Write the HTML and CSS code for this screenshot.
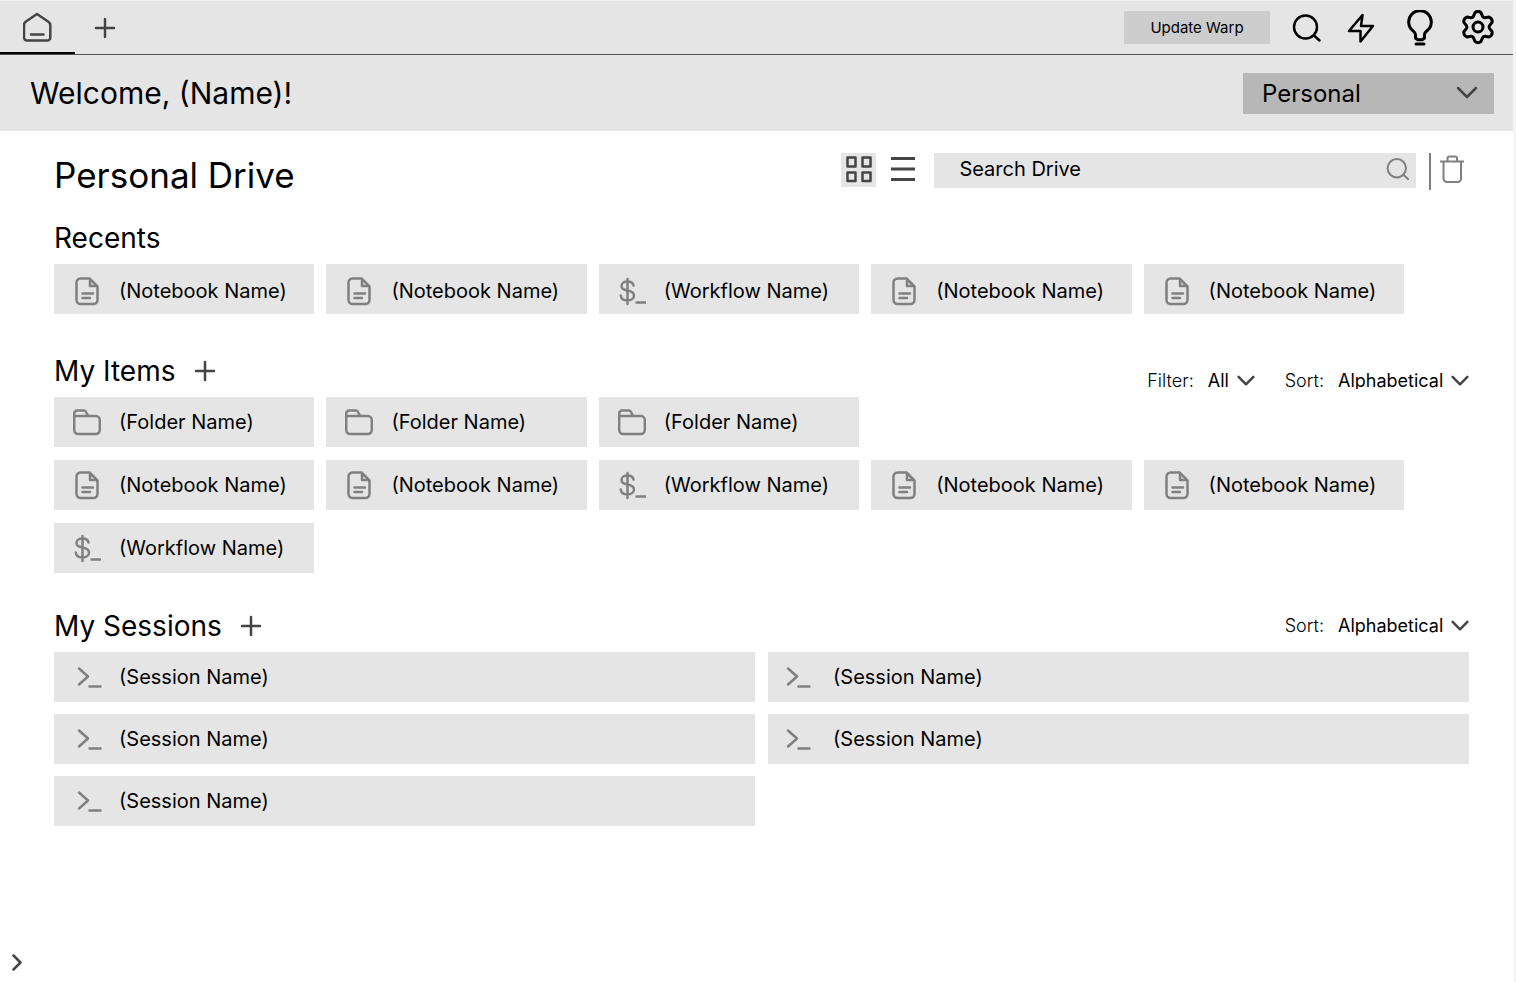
FILE: index.html
```html
<!DOCTYPE html>
<html lang="en">
<head>
<meta charset="utf-8">
<title>Personal Drive</title>
<link rel="stylesheet" href="styles.css">
</head>
<body>
<svg class="sprite" aria-hidden="true">
  <symbol id="file" viewBox="0 0 28 30">
    <path d="M8 2.500h8.500l8 8V24a4 4 0 0 1-4 4H7.500a4 4 0 0 1-4-4V6.500a4 4 0 0 1 4-4zM17 3v7h7M9.500 17.500h10.500M9.500 22h7.500"/>
  </symbol>
  <symbol id="folder" viewBox="0 0 28 30">
    <path d="M1.200 9V6.500a3 3 0 0 1 3-3h7c2.500 0 2.500 5.500 5 5.500H23a4 4 0 0 1 3.800 4v10a4 4 0 0 1-4 4H5.200a4 4 0 0 1-4-4zM1 9h16"/>
  </symbol>
  <symbol id="workflow" viewBox="0 0 28 30">
    <path d="M15.500 9.500C15 6.800 12.500 5.500 9.500 5.500c-3.500 0-6 1.700-6 4.500s2.500 4 6 4.500c4 .700 6.500 2 6.500 5s-2.700 5-6.500 5c-4 0-6.500-1.800-6.700-5M9.500 3v25M18.500 26.500h9"/>
  </symbol>
  <symbol id="session" viewBox="0 0 28 30">
    <path d="M4 6.500l9 8-9 8M14.500 24.500h11"/>
  </symbol>
  <symbol id="plus" viewBox="0 0 22 22">
    <path d="M11 2v18M2 11h18"/>
  </symbol>
  <symbol id="chevron" viewBox="0 0 22 14">
    <path d="M2 2l9 9 9-9"/>
  </symbol>
  <symbol id="search" viewBox="0 0 30 30">
    <circle cx="13.500" cy="14" r="11.500"/><path d="M22 22.500l5.500 5"/>
  </symbol>
</svg>
<div class="app">
  <nav class="topbar">
    <button class="tab tab-active" aria-label="Home">
      <svg width="30" height="30" viewBox="0 0 30 30"><path d="M14 2L25 9.500c1.500 1 2.300 1.800 2.300 3.500v12.500a3 3 0 0 1-3 3H4a3 3 0 0 1-3-3V13c0-1.700.500-2.500 2-3.500zM8 22.500h12.500"/></svg>
    </button>
    <button class="tab" aria-label="New tab"><svg width="22" height="22"><use href="#plus"/></svg></button>
    <div class="actions">
      <button class="update">Update Warp</button>
      <button class="action" aria-label="Search"><svg width="30" height="30"><use href="#search"/></svg></button>
      <button class="action" aria-label="Activity"><svg width="30" height="32" viewBox="0 0 30 32"><path d="M16.500 3L3 19h11.500v10.500L27 14H15z"/></svg></button>
      <button class="action bulb" aria-label="Tips"><svg width="28" height="36" viewBox="0 0 28 36"><path d="M9.500 28v-3.500c0-1.500-1-2.500-2.500-3.700A11.300 11.300 0 1 1 21 20.800c-1.500 1.200-2.500 2.200-2.500 3.700V28l-2 1.700h-5zM10 34h8"/></svg></button>
      <button class="action gear" aria-label="Settings"><svg width="34" height="36" viewBox="-17 -17 34 36"><circle r="5"/><path d="M-4.600-10.600L-3-14.300Q0-17 3-14.300L4.600-10.600Q5.500-9.200 6.900-9.300L11.100-9.900Q14.700-8.500 14.100-4.700L11.500-1.300Q10.800 0 11.500 1.300L14.100 4.700Q14.700 8.500 11.100 9.900L6.900 9.300Q5.500 9.200 4.600 10.600L3 14.300Q0 17-3 14.300L-4.600 10.600Q-5.500 9.200-6.900 9.300L-11.100 9.900Q-14.700 8.500-14.100 4.700L-11.500 1.300Q-10.800 0-11.500-1.300L-14.100-4.700Q-14.700-8.500-11.100-9.900L-6.900-9.300Q-5.500-9.200-4.600-10.600z"/></svg></button>
    </div>
  </nav>
  <header class="welcome">
    <h1>Welcome, (Name)!</h1>
    <div class="picker workspace">
      <select aria-label="Workspace"><option>Personal</option></select>
      <svg width="22" height="14"><use href="#chevron"/></svg>
    </div>
  </header>
  <main>
    <div class="drive-head">
      <h2>Personal Drive</h2>
      <div class="tools">
        <button class="view view-active" aria-label="Grid view"><svg width="30" height="30" viewBox="0 0 30 30"><path d="M3.500 2.500h8v9h-8zM18.500 2.500h8v9h-8zM3.500 17.500h8v8.500h-8zM18.500 17.500h8v8.500h-8z"/></svg></button>
        <button class="view" aria-label="List view"><svg width="24" height="26" viewBox="0 0 24 26"><path d="M0 1.500h24M0 12h24M0 22.500h24"/></svg></button>
        <div class="searchbox">
          <input type="text" placeholder="Search Drive" aria-label="Search Drive">
          <svg width="24" height="24"><use href="#search"/></svg>
        </div>
        <div class="trash">
          <button aria-label="Trash"><svg width="24" height="30" viewBox="0 0 24 30"><path d="M0 8.500h24M3.500 8.500V25.500a3.500 3.500 0 0 0 3.500 3.500h10.500a3.500 3.500 0 0 0 3.500-3.500V8.500M7.500 8V5.500a2 2 0 0 1 2-2h5.500a2 2 0 0 1 2 2V8"/></svg></button>
        </div>
      </div>
    </div>

    <section class="recents">
      <div class="section-head"><h3>Recents</h3></div>
      <div class="items">
        <button class="card"><svg><use href="#file"/></svg>(Notebook Name)</button>
        <button class="card"><svg><use href="#file"/></svg>(Notebook Name)</button>
        <button class="card"><svg><use href="#workflow"/></svg>(Workflow Name)</button>
        <button class="card"><svg><use href="#file"/></svg>(Notebook Name)</button>
        <button class="card"><svg><use href="#file"/></svg>(Notebook Name)</button>
      </div>
    </section>

    <section>
      <div class="section-head">
        <h3>My Items</h3>
        <button class="add" aria-label="Add item"><svg width="22" height="22"><use href="#plus"/></svg></button>
        <div class="controls controls-low">
          <label for="filter">Filter:</label>
          <div class="picker small filter"><select id="filter"><option>All</option></select><svg width="18" height="12"><use href="#chevron"/></svg></div>
          <label for="sort-items">Sort:</label>
          <div class="picker small"><select id="sort-items"><option>Alphabetical</option></select><svg width="18" height="12"><use href="#chevron"/></svg></div>
        </div>
      </div>
      <div class="items">
        <button class="card"><svg><use href="#folder"/></svg>(Folder Name)</button>
        <button class="card"><svg><use href="#folder"/></svg>(Folder Name)</button>
        <button class="card"><svg><use href="#folder"/></svg>(Folder Name)</button>
        <button class="card row-start"><svg><use href="#file"/></svg>(Notebook Name)</button>
        <button class="card"><svg><use href="#file"/></svg>(Notebook Name)</button>
        <button class="card"><svg><use href="#workflow"/></svg>(Workflow Name)</button>
        <button class="card"><svg><use href="#file"/></svg>(Notebook Name)</button>
        <button class="card"><svg><use href="#file"/></svg>(Notebook Name)</button>
        <button class="card"><svg><use href="#workflow"/></svg>(Workflow Name)</button>
      </div>
    </section>

    <section>
      <div class="section-head">
        <h3>My Sessions</h3>
        <button class="add" aria-label="Add session"><svg width="22" height="22"><use href="#plus"/></svg></button>
        <div class="controls">
          <label for="sort-sessions">Sort:</label>
          <div class="picker small"><select id="sort-sessions"><option>Alphabetical</option></select><svg width="18" height="12"><use href="#chevron"/></svg></div>
        </div>
      </div>
      <div class="sessions">
        <button class="card"><svg><use href="#session"/></svg>(Session Name)</button>
        <button class="card"><svg><use href="#session"/></svg>(Session Name)</button>
        <button class="card"><svg><use href="#session"/></svg>(Session Name)</button>
        <button class="card"><svg><use href="#session"/></svg>(Session Name)</button>
        <button class="card"><svg><use href="#session"/></svg>(Session Name)</button>
      </div>
    </section>
  </main>
  <footer><button aria-label="Expand panel"><svg width="12" height="18" viewBox="0 0 12 18"><path d="M2.500 2.500l7 7-7 7"/></svg></button></footer>
</div>
</body>
</html>
```
FILE: styles.css
```css
* { box-sizing: border-box; }
body {
  margin: 0;
  font-family: Inter, "Liberation Sans", sans-serif;
  color: #000;
  background: #fff;
}
h1, h2, h3 { margin: 0; font-weight: 400; }
button, select, input {
  font: inherit;
  color: inherit;
  border: 0;
  border-radius: 0;
  padding: 0;
  margin: 0;
  background: none;
}
svg {
  display: block;
  flex: none;
  fill: none;
  stroke: #444;
  stroke-width: 2.5;
  stroke-linecap: round;
  stroke-linejoin: round;
}
.sprite { position: absolute; width: 0; height: 0; }

.app {
  min-height: 100vh;
  display: flex;
  flex-direction: column;
  border-right: 3px solid #f5f5f5;
}

.topbar {
  display: flex;
  height: 55px;
  background: #e5e5e5;
  border-top: 1px solid #f2f2f2;
  border-bottom: 1px solid #555;
}
.tab {
  width: 60px;
  display: flex;
  align-items: center;
  justify-content: center;
}
.tab-active { width: 75px; border-bottom: 2px solid #000; }
.actions {
  margin-left: auto;
  display: flex;
  align-items: center;
  padding-right: 18px;
}
.update {
  width: 146px;
  height: 33px;
  margin-right: 22px;
  background: #cdcdcd;
  font-size: 15px;
}
.action { margin-right: 24px; }
.action svg { stroke: #000; stroke-width: 2.5; }
.bulb { margin: 0 27px 0 6px; }
.gear { margin: 0; }
.gear svg, .bulb svg { stroke-width: 3; }

.welcome {
  display: flex;
  align-items: center;
  justify-content: space-between;
  height: 76px;
  padding: 0 19px 0 30px;
  background: #e5e5e5;
}
.welcome h1 { font-size: 30px; }

.picker { display: grid; align-items: center; }
.picker select, .picker svg { grid-area: 1 / 1; }
.picker select { appearance: none; width: 100%; }
.picker svg { justify-self: end; pointer-events: none; }
.workspace { width: 251px; background: #b7b7b7; }
.workspace select { height: 41px; padding: 0 50px 0 19px; font-size: 24px; }
.workspace svg { margin-right: 16px; }

main { padding: 22px 44px 0 54px; }
.drive-head {
  display: flex;
  justify-content: space-between;
  align-items: flex-start;
  margin-bottom: 23px;
}
.drive-head h2 { font-size: 35px; line-height: 44px; }
.tools {
  width: 44%;
  display: flex;
  align-items: flex-start;
  margin-right: 5px;
}
.view { height: 34px; margin-right: 19px; }
.view svg { stroke-width: 3; stroke-linecap: butt; }
.view-active {
  width: 35px;
  display: flex;
  align-items: center;
  justify-content: center;
  margin-right: 15px;
  background: #e5e5e5;
}
.view-active svg { stroke-width: 2.5; }
.searchbox {
  flex: 1;
  display: flex;
  align-items: center;
  height: 35px;
  padding: 0 6px 3px 25px;
  background: #e5e5e5;
}
.searchbox input { flex: 1; min-width: 0; font-size: 20px; outline: 0; }
.searchbox input::placeholder { color: #000; opacity: 1; }
.searchbox svg { stroke: #808080; }
.trash {
  margin-left: 13px;
  padding-left: 9px;
  height: 37px;
  border-left: 2px solid #808080;
}
.trash svg { stroke: #808080; stroke-width: 2; stroke-linecap: butt; }

section { margin-bottom: 35px; }
.recents { margin-bottom: 39px; }
.section-head {
  display: flex;
  align-items: center;
  height: 36px;
  margin-bottom: 8px;
}
.section-head h3 { font-size: 28px; line-height: 36px; }
.add { margin-left: 18px; }
.controls {
  display: flex;
  align-items: center;
  margin-left: auto;
  font-size: 18px;
  line-height: 24px;
}
.controls-low { align-self: flex-end; line-height: 16px; }
.controls label { font-weight: 300; margin-right: 14px; }
.small select { padding-right: 25px; }
.small svg { stroke-width: 3; }
.filter { margin-right: 30px; }

.items {
  display: grid;
  grid-template-columns: repeat(5, 1fr);
  gap: 13px 12px;
  margin-right: 65px;
}
.row-start { grid-column-start: 1; }
.sessions {
  display: grid;
  grid-template-columns: repeat(2, 1fr);
  gap: 12px 13px;
}
.card {
  display: flex;
  align-items: center;
  gap: 18px;
  height: 50px;
  padding: 0 19px;
  background: #e5e5e5;
  font-size: 20px;
  white-space: nowrap;
}
.card svg { width: 28px; height: 30px; stroke: #808080; }
.recents .card { padding-top: 3px; }
.sessions .card { padding-left: 21px; gap: 16px; }
.sessions .card:nth-child(even) { padding-left: 16px; gap: 21px; }

footer { margin-top: auto; padding: 0 11px 11px; }
footer button { display: block; }
```
